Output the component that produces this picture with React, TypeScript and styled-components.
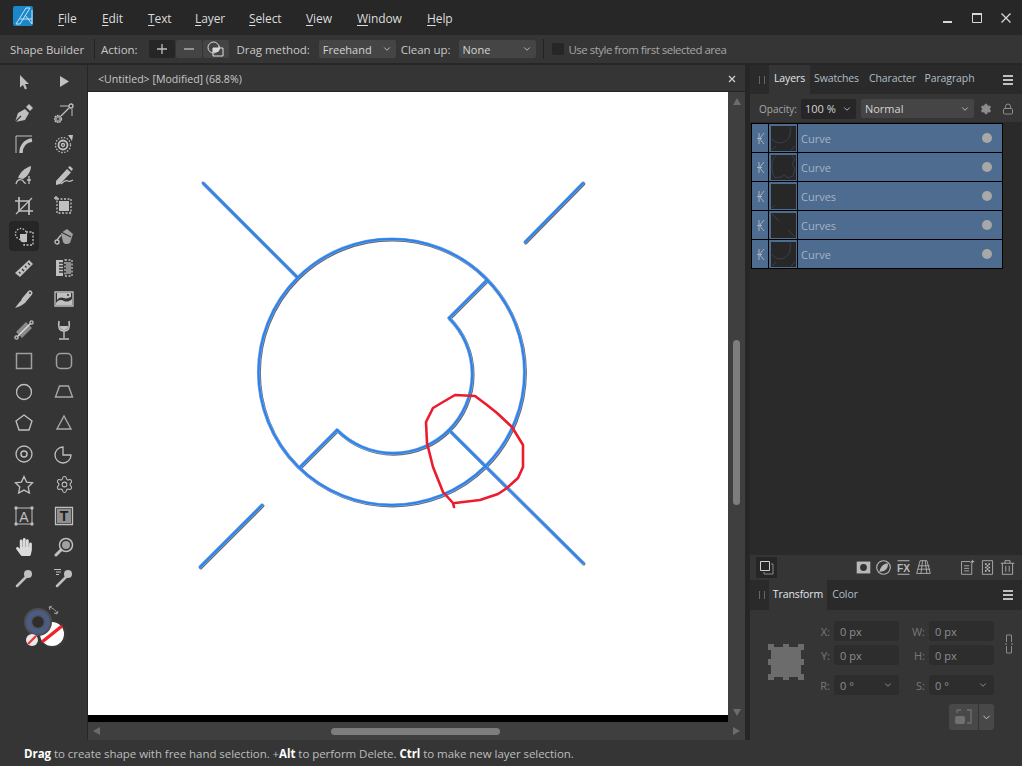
import { ReactNode } from "react";
import styled, { createGlobalStyle } from "styled-components";
import { FaHandPaper } from "react-icons/fa";
import { Settings, Lock, ChevronDown } from "lucide-react";

const GlobalStyle = createGlobalStyle`
    html, body { margin: 0; padding: 0; background: #262626; }
    * { box-sizing: border-box; }
    body { font-family: "Open Sans", "Noto Sans", "Liberation Sans", sans-serif; }
`;

const Shell = styled.div`
    width: 1022px;
    height: 766px;
    display: flex;
    flex-direction: column;
    overflow: hidden;
    background: #262626;
    color: #cfcfcf;
`;

/* title bar */
const TitleBar = styled.div`
    height: 35px;
    display: flex;
    align-items: center;
    background: #272727;
    padding-left: 13px;
    flex: none;
    & > svg { margin-top: -3px; }
`;
const MenuList = styled.div`
    display: flex;
    margin-left: 25px;
    padding-top: 2px;
`;
const MenuItem = styled.span<{ $w: number }>`
    width: ${(p) => p.$w}px;
    font-size: 12px;
    color: #dcdcdc;
    letter-spacing: -0.1px;
    & u { text-underline-offset: 2px; }
`;
const WinButtons = styled.div`
    margin-left: auto;
    display: flex;
    align-items: center;
    padding-right: 10px;
    padding-top: 0;
    gap: 17px;
    & svg { display: block; }
`;

/* context toolbar */
const ContextBar = styled.div`
    height: 28px;
    flex: none;
    background: #353535;
    display: flex;
    align-items: center;
    padding-left: 10px;
    font-size: 11.5px;
    color: #c4c4c4;
    margin-bottom: 2px;
`;
const CtxLabel = styled.span<{ $l?: number; $dim?: boolean }>`
    margin-left: ${(p) => p.$l ?? 0}px;
    white-space: nowrap;
    letter-spacing: ${(p) => (p.$dim ? "-0.52px" : "-0.05px")};
    color: ${(p) => (p.$dim ? "#a6a6a6" : "#c8c8c8")};
`;
const CtxSep = styled.span<{ $l: number }>`
    width: 1px;
    height: 20px;
    background: #222;
    margin-left: ${(p) => p.$l}px;
`;
const ActionBtn = styled.div<{ $on?: boolean; $l?: number }>`
    width: 26px;
    height: 18px;
    margin-left: ${(p) => p.$l ?? 1}px;
    display: flex;
    align-items: center;
    justify-content: center;
    background: ${(p) => (p.$on ? "#262626" : "#444")};
    border-radius: 2px;
`;
const Select = styled.div<{ $w: number; $l?: number; $dark?: boolean; $h?: number }>`
    width: ${(p) => p.$w}px;
    height: ${(p) => p.$h ?? 18}px;
    margin-left: ${(p) => p.$l ?? 0}px;
    background: ${(p) => (p.$dark ? "#262626" : "#454545")};
    border-radius: 2px;
    display: flex;
    align-items: center;
    justify-content: space-between;
    padding: 0 4px;
    font-size: 11px;
    color: #d4d4d4;
    flex: none;
`;
const Check = styled.span`
    width: 12px;
    height: 12px;
    margin-left: 8px;
    background: #262626;
    border-radius: 2px;
`;

/* main columns */
const Main = styled.div`
    flex: 1;
    min-height: 0;
    display: flex;
`;
const ToolRail = styled.div`
    width: 88px;
    flex: none;
    background: #353535;
    border-right: 1px solid #262626;
    padding: 1px 0 0 4px;
`;
const ToolGrid = styled.div`
    display: grid;
    grid-template-columns: 40px 40px;
    grid-auto-rows: 31px;
`;
const Tool = styled.div<{ $active?: boolean }>`
    display: flex;
    align-items: center;
    justify-content: center;
    color: #c0c0c0;
    position: relative;
    &::before {
        content: "";
        position: absolute;
        left: 5px;
        top: 0;
        width: 30px;
        height: 30px;
        border-radius: 4px;
        background: ${(p) => (p.$active ? "#262626" : "transparent")};
    }
    & svg { position: relative; display: block; }
`;
const ColourWell = styled.div`
    margin: 8px 0 0 12px;
`;

const DocArea = styled.div`
    width: 662px;
    flex: none;
    display: flex;
    flex-direction: column;
`;
const DocTab = styled.div`
    height: 27px;
    flex: none;
    background: #353535;
    border-bottom: 1px solid #222;
    width: 657px;
    padding: 2px 9px 0 10px;
    display: flex;
    align-items: center;
    justify-content: space-between;
    font-size: 10.6px;
    color: #c8c8c8;
`;
const CanvasRow = styled.div`
    flex: 1;
    min-height: 0;
    display: flex;
`;
const Canvas = styled.div`
    width: 640px;
    height: 630px;
    background: #fff;
    border-bottom: 7px solid #000;
    & svg { display: block; }
`;
const VScroll = styled.div`
    width: 17px;
    height: 630px;
    background: #3f3f3f;
    display: flex;
    flex-direction: column;
    align-items: center;
    padding: 6px 0;
`;
const VThumb = styled.div`
    width: 7px;
    height: 165px;
    border-radius: 4px;
    background: #7d7d7d;
    margin-top: 235px;
`;
const HScroll = styled.div`
    height: 18px;
    width: 657px;
    flex: none;
    background: #3f3f3f;
    display: flex;
    align-items: center;
    padding: 0 5px 0 5px;
`;
const HThumb = styled.div`
    width: 169px;
    height: 7px;
    border-radius: 4px;
    background: #7d7d7d;
    margin: 0 auto 0 231px;
`;
const Arrow = styled.span<{ $dir: "up" | "down" | "left" | "right" }>`
    width: 0;
    height: 0;
    flex: none;
    border-style: solid;
    border-color: transparent;
    ${(p) =>
        p.$dir === "up"
            ? "border-width: 0 4px 7px; border-bottom-color: #6c6c6c;"
            : p.$dir === "down"
            ? "border-width: 7px 4px 0; border-top-color: #6c6c6c; margin-top: auto;"
            : p.$dir === "left"
            ? "border-width: 4px 7px 4px 0; border-right-color: #6c6c6c;"
            : "border-width: 4px 0 4px 7px; border-left-color: #6c6c6c;"}
`;

/* right dock */
const Dock = styled.div`
    width: 272px;
    flex: none;
    display: flex;
    flex-direction: column;
`;
const PanelHead = styled.div<{ $h: number }>`
    height: ${(p) => p.$h}px;
    flex: none;
    background: #2a2a2a;
    display: flex;
    align-items: flex-end;
    padding-left: 5px;
    font-size: 10.5px;
    color: #b4c2cc;
`;
const Grip = styled.span`
    width: 14px;
    height: 100%;
    flex: none;
    display: flex;
    align-items: center;
    justify-content: center;
    &::before {
        content: "";
        width: 4px;
        height: 8px;
        border-left: 1px solid #666;
        border-right: 1px solid #666;
    }
`;
const Tab = styled.span<{ $w: number; $on?: boolean; $drop?: number }>`
    width: ${(p) => p.$w}px;
    height: 100%;
    flex: none;
    display: flex;
    align-items: center;
    justify-content: center;
    letter-spacing: -0.1px;
    padding-bottom: ${(p) => p.$drop ?? 3}px;
    background: ${(p) => (p.$on ? "#353535" : "transparent")};
    color: ${(p) => (p.$on ? "#e2e8ee" : "#b0bec8")};
`;
const Burger = styled.span`
    margin: auto 9px auto auto;
    width: 10px;
    height: 10px;
    border-top: 2px solid #c0c0c0;
    border-bottom: 2px solid #c0c0c0;
    position: relative;
    &::after {
        content: "";
        position: absolute;
        left: 0;
        right: 0;
        top: 2px;
        height: 2px;
        background: #c0c0c0;
    }
`;
const OpacityRow = styled.div`
    height: 28px;
    flex: none;
    background: #353535;
    display: flex;
    align-items: center;
    padding: 1px 0 0 9px;
    font-size: 10px;
    color: #a8a8a8;
    & svg { display: block; flex: none; }
`;
const GearIcon = styled(Settings)`
    margin-left: 6px;
`;
const LockIcon = styled(Lock)`
    margin-left: 10px;
`;
const LayerPane = styled.div`
    flex: 1;
    background: #2a2a2a;
    padding: 1px 0 0 1px;
    min-height: 0;
`;
const LayerRow = styled.div`
    width: 252px;
    height: 30px;
    margin-bottom: -1px;
    border: 1px solid #000;
    background: #4d6c90;
    display: flex;
    align-items: center;
    font-size: 11px;
    color: #a5b3c4;
`;
const LockMark = styled.span`
    width: 17px;
    height: 100%;
    flex: none;
    display: flex;
    align-items: center;
    justify-content: center;
    border-right: 1px solid #000;
    color: #a5b3c4;
`;
const Thumb = styled.span`
    width: 29px;
    height: 100%;
    flex: none;
    display: flex;
    align-items: center;
    justify-content: center;
    border-right: 1px solid #000;
    margin-right: 3px;
    & svg { display: block; background: #272727; }
`;
const VisDot = styled.span`
    width: 10px;
    height: 10px;
    margin: 0 10px 0 auto;
    border-radius: 50%;
    background: #a8a8a8;
`;
const LayerActions = styled.div`
    height: 25px;
    flex: none;
    background: #353535;
    display: flex;
    align-items: center;
    padding-left: 6px;
    color: #b8b8b8;
    & svg { display: block; flex: none; }
`;
const StackBtn = styled.div`
    width: 21px;
    height: 21px;
    background: #262626;
    display: flex;
    align-items: center;
    justify-content: center;
    margin-right: 76px;
`;
const ActionIcon = styled.span<{ $l?: number }>`
    width: 20px;
    margin-left: ${(p) => p.$l ?? 0}px;
    display: flex;
    justify-content: center;
`;
const TransformBody = styled.div`
    height: 130px;
    flex: none;
    background: #353535;
    display: flex;
    padding: 11px 0 0 18px;
    position: relative;
`;
const AnchorBox = styled.div`
    width: 36px;
    height: 36px;
    margin-top: 23px;
    margin-right: 10px;
    flex: none;
    & svg { display: block; }
`;
const FieldGrid = styled.div`
    display: grid;
    grid-template-columns: 16px 65px 22px 65px;
    grid-template-rows: 20px 20px 2px 20px;
    column-gap: 4px;
    row-gap: 4px;
    font-size: 11px;
    align-items: center;
`;
const FieldLabel = styled.span`
    text-align: right;
    color: #787878;
`;
const FieldBox = styled.div`
    height: 20px;
    background: #2d2d2d;
    border-radius: 3px;
    display: flex;
    align-items: center;
    justify-content: space-between;
    padding: 0 6px;
    color: #8a8f94;
`;
const RowGap = styled.span`
    grid-column: 1 / -1;
`;
const ChainLink = styled.div`
    margin: 13px 0 0 11px;
    & svg { display: block; }
`;
const AlignBtn = styled.div`
    position: absolute;
    left: 199px;
    top: 94px;
    width: 45px;
    height: 26px;
    background: #484848;
    border-radius: 3px;
    display: flex;
    align-items: center;
    color: #d0d0d0;
    & svg { display: block; }
`;
const AlignIcon = styled.span`
    width: 30px;
    height: 100%;
    display: flex;
    align-items: center;
    justify-content: center;
    border-right: 1px solid #333;
`;
const AlignCaret = styled(ChevronDown)`
    margin-left: 2px;
`;

const StatusBar = styled.div`
    height: 26px;
    flex: none;
    background: #353535;
    display: flex;
    align-items: center;
    padding-left: 24px;
    font-size: 11.5px;
    color: #bdbdbd;
    letter-spacing: -0.05px;
    white-space: pre;
    & b { color: #fff; font-weight: 700; }
`;

const Ico = ({ children, s = 20 }: { children: ReactNode; s?: number }) => (
    <svg width={s} height={s} viewBox="0 0 20 20" fill="none" stroke="currentColor" strokeWidth="1.3">
        {children}
    </svg>
);

const tools: { key: string; node: ReactNode; active?: boolean }[] = [
    { key: "move", node: <Ico><path d="M6 3v12.500l3-2.500 2 4.500 2-.9-2-4.500h4z" fill="currentColor" stroke="none" /></Ico> },
    { key: "node", node: <Ico><path d="M6 4v11l9-5.500z" fill="currentColor" stroke="none" /></Ico> },
    { key: "pen", node: <Ico><path d="M1 19l3-9 7-4 4 4-4 7z" fill="currentColor" stroke="none" /><path d="M12 4l3-3 4 4-3 3z" fill="currentColor" stroke="none" /><path d="M1 19l6-6" stroke="#353535" /></Ico> },
    { key: "corner", node: <Ico><circle cx="4" cy="16" r="3.500" fill="#8c8c8c" strokeDasharray="1.500 1" /><circle cx="4" cy="16" r="1" fill="#353535" stroke="none" /><circle cx="17" cy="3" r="2" /><path d="M7 13l8-8" /><path d="M18 6v7M6 3h9" strokeWidth="1" /></Ico> },
    { key: "curve", node: <Ico><path d="M2 19V2h16" strokeWidth="1" /><path d="M7 19C7 12 11 7 18 6" strokeWidth="3.500" /></Ico> },
    { key: "contour", node: <Ico><circle cx="9" cy="11" r="7.500" strokeDasharray="1.500 1.500" /><circle cx="9" cy="11" r="4.500" strokeWidth="1.800" /><circle cx="9" cy="11" r="1.500" /><path d="M14 1h5l-1 6z" fill="currentColor" stroke="none" /></Ico> },
    { key: "brush", node: <Ico><path d="M4 13C6 7 11 3 17 1c0 5-3 10-8 13z" fill="currentColor" stroke="none" /><path d="M2 19c1-4 3-5 6-4 2 1 2 4 4 3M15 11v8M13 15h4" /></Ico> },
    { key: "pencil", node: <Ico><path d="M2 16L13 4l4 3.500L6 19l-4 1z" fill="currentColor" stroke="none" /><path d="M14 2.500l2-1.500 3 3-1.500 2z" fill="currentColor" stroke="none" /><path d="M7 19c3-3 5-4 7-3s3 0 5-1" /></Ico> },
    { key: "crop", node: <Ico><path d="M5 1v14h14M1 5h14v14" strokeWidth="1.700" /><path d="M18 2L2 18" /></Ico> },
    { key: "artboard", node: <Ico><path d="M3 3h14v14H3z" strokeDasharray="2 1.500" /><path d="M5 5h10v10H5z" fill="currentColor" stroke="none" /><path d="M0 2h4M2 0v4" /></Ico> },
    { key: "builder", active: true, node: <Ico><circle cx="7" cy="7" r="5.500" strokeDasharray="1.500 1.500" /><path d="M12 5h7v13h-9v-7" strokeDasharray="2 1.500" /><path d="M6 7h7v8H8c-2 0-2-3-2-8z" fill="currentColor" stroke="none" /></Ico> },
    { key: "fill", node: <Ico><path d="M7 6l6-4 6 5-3 9c-3 2-6 1-7-1z" fill="#a0a0a0" stroke="none" /><path d="M7 5l10 5" stroke="#353535" /><circle cx="3" cy="15" r="2" /><path d="M3 13L7 8" /></Ico> },
    { key: "ruler", node: <Ico><path d="M1 15L15 2l4 4L6 19z" fill="currentColor" stroke="none" /><path d="M5 14l1.500 1.500M8 11l2 2M11 8l1.500 1.500M14 5l2 2" stroke="#353535" /></Ico> },
    { key: "guides", node: <Ico><path d="M2 2h7v16H2z" fill="currentColor" stroke="none" /><path d="M5 5h4M5 8h4M5 11h4M5 14h4" stroke="#353535" /><path d="M11 2h7v16h-7z" strokeDasharray="2 1.500" /><path d="M12 4h5v12h-5z" fill="#8c8c8c" stroke="none" /></Ico> },
    { key: "knife", node: <Ico><path d="M1 19C4 15 6 12 9 10l3 3c-3 3-7 5-11 6z" fill="currentColor" stroke="none" /><path d="M10 11l6-7" strokeWidth="5" strokeLinecap="round" /><circle cx="16" cy="4" r="1" fill="#353535" stroke="none" /></Ico> },
    { key: "picture", node: <Ico><path d="M1 3h18v14H1z" /><path d="M2 14c3-4 6-3 8-2s5 1 8-2v6H2z" fill="currentColor" stroke="none" /><path d="M3 4h14v4c-3 1-5 2-7 1S5 8 3 11z" fill="currentColor" stroke="none" /><circle cx="14" cy="6" r="1" fill="#353535" stroke="none" /></Ico> },
    { key: "transparency", node: <Ico><path d="M2 12L12 2l6 6-10 10z" fill="#8a8a8a" stroke="none" /><path d="M3 17L17 3" stroke="#e0e0e0" /><circle cx="2.500" cy="17.500" r="1.600" /><circle cx="17.500" cy="2.500" r="1.600" /></Ico> },
    { key: "glass", node: <Ico><path d="M5 1c-1 6 0 10 5 10s6-4 5-10" strokeWidth="1.600" /><path d="M6 6c0 3 1 4 4 4s4-1 4-4z" fill="currentColor" stroke="none" /><path d="M10 11v7M5 19h10" strokeWidth="1.400" /></Ico> },
    { key: "rect", node: <Ico><path d="M2.500 2.500h15v15h-15z" strokeWidth="1.500" stroke="#a0a0a0" /></Ico> },
    { key: "rrect", node: <Ico><rect x="2.500" y="2.500" width="15" height="15" rx="4" strokeWidth="1.500" stroke="#a0a0a0" /></Ico> },
    { key: "ellipse", node: <Ico><circle cx="10" cy="10" r="7.500" /></Ico> },
    { key: "trapezoid", node: <Ico><path d="M5.500 4h9l4 11H1.500z" stroke="#a8a8a8" strokeWidth="1.400" /></Ico> },
    { key: "pentagon", node: <Ico><path d="M10 2l8 6-3 9H5L2 8z" /></Ico> },
    { key: "triangle", node: <Ico><path d="M10 3l7 13H3z" stroke="#a8a8a8" strokeWidth="1.400" /></Ico> },
    { key: "donut", node: <Ico><circle cx="10" cy="10" r="8" /><circle cx="10" cy="10" r="3" strokeWidth="1.500" /></Ico> },
    { key: "pie", node: <Ico><path d="M9 3a8 8 0 1 0 8 8H9z" /></Ico> },
    { key: "star", node: <Ico><path d="M10 1.500l2.600 5.600 6 .7-4.400 4.200 1.200 6.100L10 15.100 4.600 18.100l1.200-6.100L1.400 7.800l6-.7z" /></Ico> },
    { key: "cog", node: <Settings size={19} strokeWidth={1.3} /> },
    { key: "frametext", node: <Ico><path d="M2 2h16v16H2z" strokeWidth="1" /><circle cx="2" cy="2" r="1" fill="currentColor" /><circle cx="18" cy="2" r="1" fill="currentColor" /><circle cx="2" cy="18" r="1" fill="currentColor" /><circle cx="18" cy="18" r="1" fill="currentColor" /><text x="10" y="15.500" fontSize="14" fontFamily="Liberation Sans" textAnchor="middle" fill="currentColor" stroke="none">A</text></Ico> },
    { key: "arttext", node: <Ico><path d="M1.500 1.500h17v17h-17z" /><path d="M3 3h14v14H3z" fill="#8f8f8f" stroke="none" /><text x="10" y="15" fontSize="14" fontWeight="700" fontFamily="Liberation Sans" textAnchor="middle" fill="#1f1f1f" stroke="none">T</text></Ico> },
    { key: "hand", node: <FaHandPaper size={18} color="#dcdcdc" /> },
    { key: "zoom", node: <Ico><circle cx="12" cy="8" r="6.500" strokeWidth="1.500" /><circle cx="12" cy="8" r="4" fill="#a0a0a0" stroke="none" /><path d="M2 18l5-5" strokeWidth="3" strokeLinecap="round" /></Ico> },
    { key: "dropper", node: <Ico><circle cx="14" cy="6" r="4" fill="currentColor" stroke="none" /><path d="M3 18l9-9" strokeWidth="2.500" strokeLinecap="round" /></Ico> },
    { key: "sampler", node: <Ico><circle cx="14" cy="6" r="4" fill="currentColor" stroke="none" /><path d="M3 18l9-9" strokeWidth="2.500" strokeLinecap="round" /><path d="M0 1.500h7M2 4h5M2 6.500h3" strokeWidth="1" /></Ico> },
];

const layers = [
    { name: "Curve", thumb: <path d="M19 1C21 10 16 17 9 17C6 17 3 15 1 13M1 24l4-4M24 20l-4 4" /> },
    { name: "Curve", thumb: <path d="M5 1C2 3 1 6 1 12C1 16 2 20 4 23L10 22L13 20L17 23L22 21L24 14L21 9L24 4L21 1" /> },
    { name: "Curves", thumb: <path d="M1 24l3-3" /> },
    { name: "Curves", thumb: <path d="M1 1l7 7M17 17l7 7" /> },
    { name: "Curve", thumb: <path d="M19 1C21 10 16 17 9 17C6 17 3 15 1 13M1 24l4-4M24 20l-4 4" /> },
];

function Caret({ c = "#cfcfcf" }: { c?: string }) {
    return <ChevronDown size={10} color={c} strokeWidth={2} />;
}

const wave = "M454 507L453 503L443 492L433 467L427 443L426 422L433 408L443 402L455 395L475 396L487 405L497 413L512 427L523 445L523 467L518 478L507 488L498 494L480 500L455 503";
const shapes = [
    "M203 183L297 277",
    "M583 183L525 242",
    "M262 505L200 567",
    "M449 430L583 563",
    "M449 318L487 280",
    "M337 430L300 467",
];

function Drawing() {
    const all = (
        <>
            <circle cx="391.500" cy="372" r="133" />
            <path d="M449 318A79 79 0 0 1 337 430" />
            {shapes.map((d) => (
                <path key={d} d={d} />
            ))}
        </>
    );
    return (
        <svg width="640" height="623" viewBox="88 92 640 623">
            <g fill="none" stroke="#5f6676" strokeWidth="3.400" strokeLinecap="round" transform="translate(0.700 0.800)">{all}</g>
            <g fill="none" stroke="#7fadea" strokeWidth="3.200" strokeLinecap="round">{all}</g>
            <g fill="none" stroke="#2c82ea" strokeWidth="2" strokeLinecap="round">{all}</g>
            <path d={wave} fill="none" stroke="#ec1c2e" strokeWidth="2.600" strokeLinejoin="round" strokeLinecap="round" />
        </svg>
    );
}

function Well() {
    return (
        <svg width="56" height="56" viewBox="0 0 56 56">
            <circle cx="37" cy="33" r="14" fill="#3a3a3a" />
            <circle cx="36" cy="33" r="12" fill="#fff" />
            <path d="M26 41L46 25" stroke="#f0222a" strokeWidth="3.500" />
            <circle cx="22" cy="21" r="13" fill="#4a5b85" stroke="#4e4e4e" strokeWidth="2" />
            <circle cx="22" cy="21" r="6.500" fill="#2e2e2e" stroke="#555" strokeWidth="1.500" />
            <circle cx="16" cy="39" r="6" fill="#e8e8e8" />
            <path d="M12 43L20 35" stroke="#e8333a" strokeWidth="2.200" />
            <path d="M33 6c4 1 7 3 8 7M33 6l3-1M33 6l1 3M41 13l-3-1M41 13l1-3" fill="none" stroke="#9a9a9a" strokeWidth="1" />
        </svg>
    );
}

export default function App() {
    return (
        <Shell>
            <GlobalStyle />
            <TitleBar>
                <svg width="20" height="20" viewBox="0 0 20 20">
                    <rect width="20" height="20" rx="2" fill="#1b86c8" />
                    <path d="M3 18L13 2h4L7 18zM7 13h12M12 9l7 9M19 4v14" fill="none" stroke="#bfe6fb" strokeWidth="1" />
                </svg>
                <MenuList>
                    <MenuItem $w={44}><u>F</u>ile</MenuItem>
                    <MenuItem $w={46}><u>E</u>dit</MenuItem>
                    <MenuItem $w={47}><u>T</u>ext</MenuItem>
                    <MenuItem $w={54}><u>L</u>ayer</MenuItem>
                    <MenuItem $w={57}><u>S</u>elect</MenuItem>
                    <MenuItem $w={51}><u>V</u>iew</MenuItem>
                    <MenuItem $w={70}><u>W</u>indow</MenuItem>
                    <MenuItem $w={40}><u>H</u>elp</MenuItem>
                </MenuList>
                <WinButtons>
                    <svg width="12" height="12" viewBox="0 0 12 12"><path d="M1 9h9v2H1z" fill="#d8d8d8" /></svg>
                    <svg width="12" height="12" viewBox="0 0 12 12"><path d="M1.500 1.500h9v9h-9z" fill="none" stroke="#d8d8d8" /><path d="M1 1h10v2H1z" fill="#d8d8d8" /></svg>
                    <svg width="12" height="12" viewBox="0 0 12 12"><path d="M1.500 1.500l9 9M10.500 1.500l-9 9" stroke="#d8d8d8" strokeWidth="1.300" /></svg>
                </WinButtons>
            </TitleBar>

            <ContextBar>
                <CtxLabel>Shape Builder</CtxLabel>
                <CtxSep $l={10} />
                <CtxLabel $l={6}>Action:</CtxLabel>
                <ActionBtn $on $l={11}>
                    <svg width="12" height="12" viewBox="0 0 12 12"><path d="M6 1v10M1 6h10" stroke="#bdbdbd" strokeWidth="1.300" /></svg>
                </ActionBtn>
                <ActionBtn>
                    <svg width="12" height="12" viewBox="0 0 12 12"><path d="M1 6h10" stroke="#bdbdbd" strokeWidth="1.300" /></svg>
                </ActionBtn>
                <ActionBtn>
                    <svg width="17" height="16" viewBox="0 0 17 16">
                        <circle cx="6.500" cy="6.500" r="5.500" fill="none" stroke="#e0e0e0" />
                        <path d="M6 7h6v-3a5 5 0 0 1 -1 7H6z" fill="#d8d8d8" />
                        <path d="M6 7h10v8H6z" fill="none" stroke="#e0e0e0" />
                    </svg>
                </ActionBtn>
                <CtxLabel $l={8}>Drag method:</CtxLabel>
                <Select $w={77} $l={9}>Freehand<Caret /></Select>
                <CtxLabel $l={5}>Clean up:</CtxLabel>
                <Select $w={77} $l={8}>None<Caret /></Select>
                <CtxSep $l={7} />
                <Check />
                <CtxLabel $l={5} $dim>Use style from first selected area</CtxLabel>
            </ContextBar>

            <Main>
                <ToolRail>
                    <ToolGrid>
                        {tools.map((t) => (
                            <Tool key={t.key} $active={t.active}>{t.node}</Tool>
                        ))}
                    </ToolGrid>
                    <ColourWell><Well /></ColourWell>
                </ToolRail>

                <DocArea>
                    <DocTab>
                        <span>&lt;Untitled&gt; [Modified] (68.8%)</span>
                        <svg width="8" height="8" viewBox="0 0 8 8"><path d="M1 1l6 6M7 1L1 7" stroke="#d0d0d0" strokeWidth="1.200" /></svg>
                    </DocTab>
                    <CanvasRow>
                        <Canvas><Drawing /></Canvas>
                        <VScroll>
                            <Arrow $dir="up" />
                            <VThumb />
                            <Arrow $dir="down" />
                        </VScroll>
                    </CanvasRow>
                    <HScroll>
                        <Arrow $dir="left" />
                        <HThumb />
                        <Arrow $dir="right" />
                    </HScroll>
                </DocArea>

                <Dock>
                    <PanelHead $h={29}>
                        <Grip />
                        <Tab $w={41} $on>Layers</Tab>
                        <Tab $w={53}>Swatches</Tab>
                        <Tab $w={59}>Character</Tab>
                        <Tab $w={55}>Paragraph</Tab>
                        <Burger />
                    </PanelHead>
                    <OpacityRow>
                        <span>Opacity:</span>
                        <Select $w={55} $l={4} $h={20} $dark>100 %<Caret /></Select>
                        <Select $w={113} $l={5} $h={19}>Normal<Caret /></Select>
                        <GearIcon size={12} color="#8e8e8e" fill="#8e8e8e" strokeWidth={1.5} />
                        <LockIcon size={12} color="#8e8e8e" strokeWidth={2} />
                    </OpacityRow>
                    <LayerPane>
                        {layers.map((l, i) => (
                            <LayerRow key={i}>
                                <LockMark>
                                    <svg width="9" height="13" viewBox="0 0 9 13"><path d="M3 1v11M8 1L3.500 6.500 8 12M1 6.500h5" fill="none" stroke="currentColor" strokeWidth="1" /></svg>
                                </LockMark>
                                <Thumb>
                                    <svg width="25" height="25" viewBox="0 0 25 25"><g fill="none" stroke="#3f4c60" strokeWidth="0.700">{l.thumb}</g></svg>
                                </Thumb>
                                {l.name}
                                <VisDot />
                            </LayerRow>
                        ))}
                    </LayerPane>
                    <LayerActions>
                        <StackBtn>
                            <svg width="16" height="16" viewBox="0 0 16 16"><path d="M1.500 1.500h9v9h-9z" fill="none" stroke="#d0d0d0" /><path d="M12 4h2v10H5v-2" fill="none" stroke="#8a8a8a" /></svg>
                        </StackBtn>
                        <ActionIcon><Ico s={17}><path d="M2 3h16v14H2z" fill="#b8b8b8" stroke="none" /><circle cx="10" cy="10" r="4" fill="#333" stroke="none" /></Ico></ActionIcon>
                        <ActionIcon><Ico s={17}><circle cx="10" cy="10" r="8" /><path d="M5 15C7 8 10 6 15 5c1 5-2 10-10 10z" fill="#b8b8b8" stroke="none" /></Ico></ActionIcon>
                        <ActionIcon><Ico s={17}><path d="M3 2h14M3 18h14" /><text x="10" y="15" fontSize="12" fontWeight="700" fontFamily="Liberation Sans" textAnchor="middle" fill="currentColor" stroke="none">FX</text></Ico></ActionIcon>
                        <ActionIcon><Ico s={17}><path d="M6 2h8l4 15H2zM9 2L7 17M12 2l2 15M4 8h13M3 12h15" strokeWidth="1" /></Ico></ActionIcon>
                        <ActionIcon $l={24}><Ico s={17}><path d="M3 3h10l2 2v13H3zM6 8h6M6 11h6M6 14h6M16 1v4M14 3h4" strokeWidth="1" /></Ico></ActionIcon>
                        <ActionIcon><Ico s={17}><path d="M4 2h12v16H4z" strokeWidth="1" /><path d="M7 5h2v2H7zM11 5h2v2h-2zM9 7h2v2H9zM7 9h2v2H7zM11 9h2v2h-2zM9 11h2v2H9zM7 13h2v2H7zM11 13h2v2h-2z" fill="currentColor" stroke="none" /></Ico></ActionIcon>
                        <ActionIcon><Ico s={17}><path d="M2 5h16M7 5V2h6v3M4 5v13h12V5M8 8v7M12 8v7" strokeWidth="1" /></Ico></ActionIcon>
                    </LayerActions>
                    <PanelHead $h={30}>
                        <Grip />
                        <Tab $w={58} $on $drop={2}>Transform</Tab>
                        <Tab $w={36} $drop={2}>Color</Tab>
                        <Burger />
                    </PanelHead>
                    <TransformBody>
                        <AnchorBox>
                            <svg width="36" height="36" viewBox="0 0 36 36">
                                <path d="M0 0h6v3h9V0h6v3h9V0h6v6h-3v9h3v6h-3v9h3v6h-6v-3h-9v3h-6v-3H6v3H0v-6h3v-9H0v-6h3V6H0z" fill="#6c6c6c" />
                            </svg>
                        </AnchorBox>
                        <FieldGrid>
                            <FieldLabel>X:</FieldLabel><FieldBox>0 px</FieldBox>
                            <FieldLabel>W:</FieldLabel><FieldBox>0 px</FieldBox>
                            <FieldLabel>Y:</FieldLabel><FieldBox>0 px</FieldBox>
                            <FieldLabel>H:</FieldLabel><FieldBox>0 px</FieldBox>
                            <RowGap />
                            <FieldLabel>R:</FieldLabel><FieldBox>0 °<Caret c="#9a9a9a" /></FieldBox>
                            <FieldLabel>S:</FieldLabel><FieldBox>0 °<Caret c="#9a9a9a" /></FieldBox>
                        </FieldGrid>
                        <ChainLink>
                            <svg width="8" height="20" viewBox="0 0 8 20"><path d="M1.500 8V1h5v7M1.500 12v7h5v-7" fill="none" stroke="#8a8a8a" /><path d="M0 10h2M6 10h2" stroke="#8a8a8a" /></svg>
                        </ChainLink>
                        <AlignBtn>
                            <AlignIcon>
                                <svg width="18" height="18" viewBox="0 0 18 18">
                                    <path d="M6 2H2M12 2h4v13h-4M2 2v3" fill="none" stroke="#707070" strokeWidth="1.300" />
                                    <rect x="0" y="8" width="10" height="8" rx="2" fill="#707070" />
                                </svg>
                            </AlignIcon>
                            <AlignCaret size={11} strokeWidth={2} />
                        </AlignBtn>
                    </TransformBody>
                </Dock>
            </Main>

            <StatusBar>
                <b>Drag</b> to create shape with free hand selection. +<b>Alt</b> to perform Delete. <b>Ctrl</b> to make new layer selection.
            </StatusBar>
        </Shell>
    );
}
